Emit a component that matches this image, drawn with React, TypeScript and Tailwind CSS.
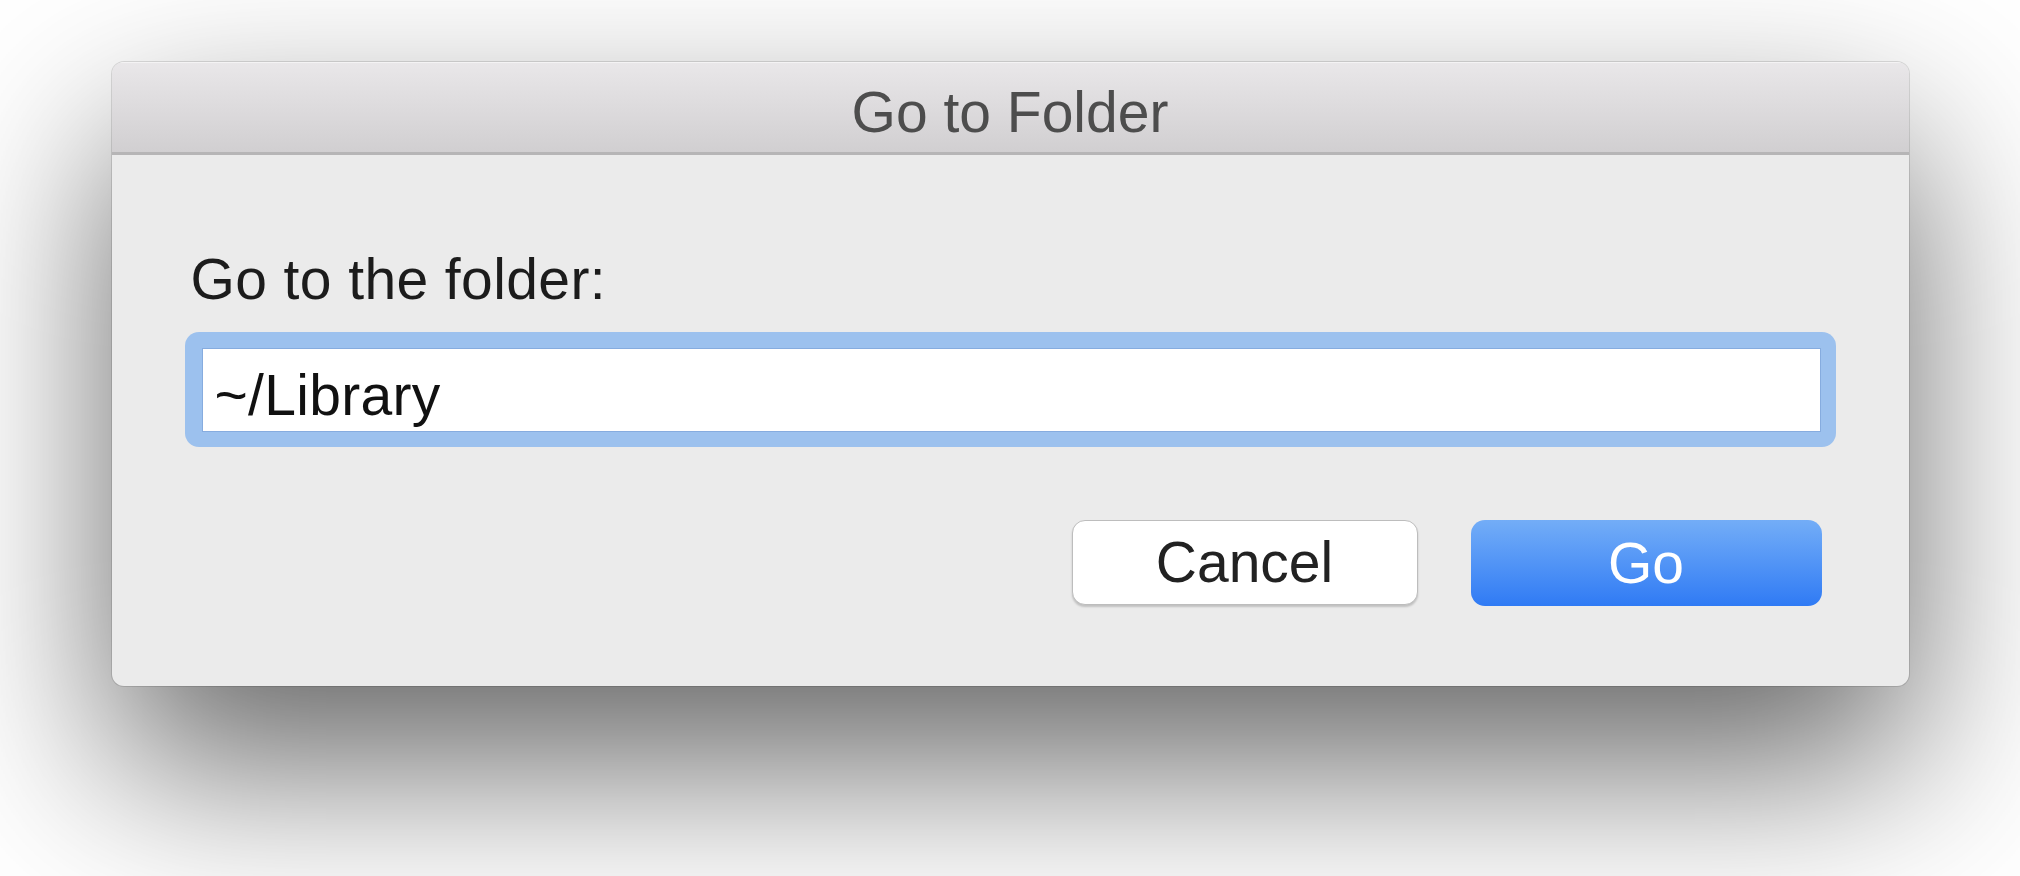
import React from "react";

export default function App() {
  return (
    <div
      className="w-[2020px] h-[876px] bg-white overflow-hidden flex justify-center pt-[62px]"
      style={{ fontFamily: '"Liberation Sans", Arial, sans-serif' }}
    >
      <div className="w-[1797px] h-[624px] shrink-0 rounded-[12px] bg-[#ebebeb] flex flex-col overflow-hidden shadow-[0_80px_180px_rgba(0,0,0,0.6),0_0_0_1px_rgba(0,0,0,0.12)]">
        <div className="h-[93px] shrink-0 flex items-center justify-center bg-gradient-to-b from-[#e9e7e9] to-[#d1cfd1] border-b-[3px] border-[#b6b5b6] border-t border-t-[#f4f3f4]">
          <span className="text-[57px] leading-[64px] text-[#4d4d4d] pt-[8px]">Go to Folder</span>
        </div>
        <div className="flex flex-col flex-1 px-[73px] pt-[92px]">
          <div className="ml-[6px] text-[57px] leading-[64px] tracking-[0.4px] text-[#1c1c1c]">Go to the folder:</div>
          <div className="mt-[21px] h-[115px] rounded-[14px] bg-[#9cc1ee] pl-[17px] pr-[15px] pt-[16px] pb-[15px]">
            <div className="h-full bg-white border border-[#86acdf] pl-[12px] pt-[14px] text-[57px] leading-[64px] tracking-[0.3px] text-[#111]">
              ~/Library
            </div>
          </div>
          <div className="mt-[73px] flex justify-end gap-[53px] pr-[14px]">
            <button className="w-[346px] h-[85px] rounded-[13px] bg-white border border-[#bdbdbd] shadow-[0_2px_2px_rgba(0,0,0,0.18)] text-[57px] leading-none text-[#222] flex items-center justify-center">
              Cancel
            </button>
            <button className="w-[351px] h-[86px] rounded-[14px] bg-gradient-to-b from-[#73adf7] to-[#2f7af4] text-[57px] leading-none text-white flex items-center justify-center">
              Go
            </button>
          </div>
        </div>
      </div>
    </div>
  );
}
